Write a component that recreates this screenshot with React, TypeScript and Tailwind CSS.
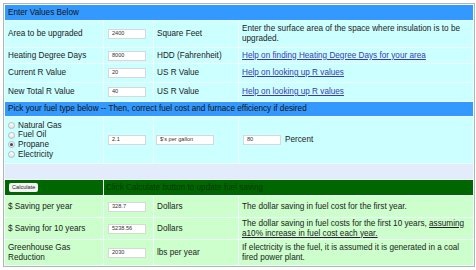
import React from "react";

const Field: React.FC<{ value: string; w?: string }> = ({ value, w = "w-[38px]" }) => (
  <div
    className={`${w} h-[10px] bg-white border border-[#d8d8d8] flex items-center px-[3px] text-[5.6px] text-[#333] leading-none`}
  >
    {value}
  </div>
);

const Radio: React.FC<{ label: string; checked?: boolean }> = ({ label, checked }) => (
  <div className="flex items-center h-[9.7px]">
    <span className="w-[7px] h-[7px] rounded-full border border-[#b8b8b8] bg-gradient-to-b from-white to-[#e4e4e4] flex items-center justify-center mr-[3px]">
      {checked && <span className="w-[3px] h-[3px] rounded-full bg-[#444]" />}
    </span>
    {label}
  </div>
);

const App: React.FC = () => {
  const cyan = "bg-[#ccffff]";
  const green = "bg-[#ccffcc]";
  return (
    <div className="w-[476px] h-[270px] bg-white pt-[3px] pl-[3px]" style={{ fontFamily: '"Liberation Sans", Arial, sans-serif' }}>
      <div className="w-[472px] border border-[#b4b4b4] bg-[#eefcfc] p-px text-[8.2px] leading-[9.7px] text-[#222]">
        <div className="grid grid-cols-[98px_49px_84px_1fr] gap-px">
          {/* Inputs section */}
          <div className="col-span-4 h-[15px] bg-[#3399ff] flex items-center px-[3px] text-[#111]">Enter Values Below</div>

          <div className={`${cyan} h-[26px] flex items-center px-[3px]`}>Area to be upgraded</div>
          <div className={`${cyan} flex items-center px-[4px]`}><Field value="2400" /></div>
          <div className={`${cyan} flex items-center px-[3px]`}>Square Feet</div>
          <div className={`${cyan} flex items-center px-[3px]`}>Enter the surface area of the space where insulation is to be upgraded.</div>

          <div className={`${cyan} h-[15px] flex items-center px-[3px]`}>Heating Degree Days</div>
          <div className={`${cyan} flex items-center px-[4px]`}><Field value="8000" /></div>
          <div className={`${cyan} flex items-center px-[3px]`}>HDD (Fahrenheit)</div>
          <div className={`${cyan} flex items-center px-[3px]`}>
            <span className="underline text-[#3a3ab0]">Help on finding Heating Degree Days for your area</span>
          </div>

          <div className={`${cyan} h-[18px] flex items-center px-[3px]`}>Current R Value</div>
          <div className={`${cyan} flex items-center px-[4px]`}><Field value="20" /></div>
          <div className={`${cyan} flex items-center px-[3px]`}>US R Value</div>
          <div className={`${cyan} flex items-center px-[3px]`}>
            <span className="underline text-[#3a3ab0]">Help on looking up R values</span>
          </div>

          <div className={`${cyan} h-[18px] flex items-center px-[3px]`}>New Total R Value</div>
          <div className={`${cyan} flex items-center px-[4px]`}><Field value="40" /></div>
          <div className={`${cyan} flex items-center px-[3px]`}>US R Value</div>
          <div className={`${cyan} flex items-center px-[3px]`}>
            <span className="underline text-[#3a3ab0]">Help on looking up R values</span>
          </div>

          {/* Fuel section */}
          <div className="col-span-4 h-[14px] bg-[#3399ff] flex items-center px-[3px] text-[#111]">
            Pick your fuel type below -- Then, correct fuel cost and furnace efficiency if desired
          </div>

          <div className={`${cyan} h-[46px] flex flex-col justify-center px-[3px]`}>
            <Radio label="Natural Gas" />
            <Radio label="Fuel Oil" />
            <Radio label="Propane" checked />
            <Radio label="Electricity" />
          </div>
          <div className={`${cyan} flex items-center px-[4px]`}><Field value="2.1" /></div>
          <div className={`${cyan} flex items-center px-[2px]`}><Field value="$'s per gallon" w="w-[58px]" /></div>
          <div className={`${cyan} flex items-center px-[4px] gap-[4px]`}>
            <Field value="80" />
            <span>Percent</span>
          </div>

          <div className="col-span-4 h-[15px] bg-[#e3ecfb]" />

          {/* Results section */}
          <div className="h-[15px] bg-[#006600] flex items-center px-[4px]">
            <div className="h-[9px] px-[3px] bg-[#f4f4f4] rounded-[2px] flex items-center text-[5.6px] text-[#222] leading-none">
              Calculate
            </div>
          </div>
          <div className="col-span-3 bg-[#006600] flex items-center px-[2px] text-[#0a3a0a]">
            Click Calculate button to update fuel saving
          </div>

          <div className={`${green} h-[21px] flex items-center px-[3px]`}>$ Saving per year</div>
          <div className={`${green} flex items-center px-[4px]`}><Field value="328.7" /></div>
          <div className={`${green} flex items-center px-[3px]`}>Dollars</div>
          <div className={`${green} flex items-center px-[3px]`}>The dollar saving in fuel cost for the first year.</div>

          <div className={`${green} h-[21px] flex items-center px-[3px]`}>$ Saving for 10 years</div>
          <div className={`${green} flex items-center px-[4px]`}><Field value="5238.56" /></div>
          <div className={`${green} flex items-center px-[3px]`}>Dollars</div>
          <div className={`${green} flex items-center px-[3px]`}>
            <span>
              The dollar saving in fuel costs for the first 10 years,{" "}
              <span className="underline">assuming a10% increase in fuel cost each year.</span>
            </span>
          </div>

          <div className={`${green} h-[25px] flex items-center px-[3px]`}>Greenhouse Gas Reduction</div>
          <div className={`${green} flex items-center px-[4px]`}><Field value="2030" /></div>
          <div className={`${green} flex items-center px-[3px]`}>lbs per year</div>
          <div className={`${green} flex items-center px-[3px]`}>
            If electricity is the fuel, it is assumed it is generated in a coal fired power plant.
          </div>
        </div>
      </div>
    </div>
  );
};

export default App;
